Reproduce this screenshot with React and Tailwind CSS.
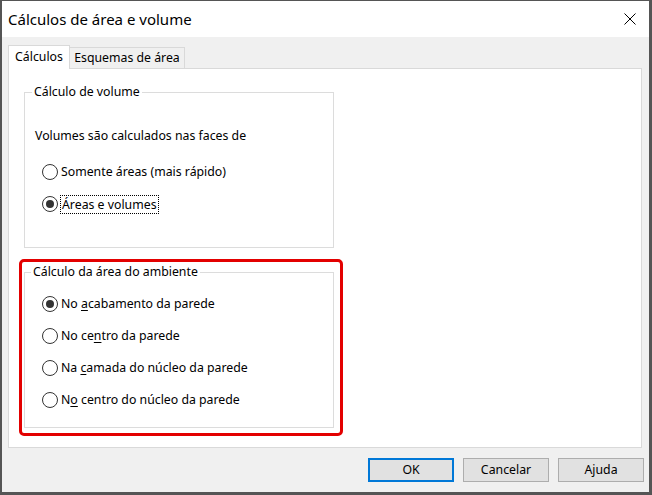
import React from "react";

const font = { fontFamily: '"Noto Sans", "Liberation Sans", sans-serif' };

function Radio({ checked }) {
  return (
    <span className="w-[16px] h-[16px] rounded-full border border-[#333333] bg-white flex items-center justify-center shrink-0">
      {checked && <span className="w-[8px] h-[8px] rounded-full bg-[#333333]" />}
    </span>
  );
}

function Row({ checked, children }) {
  return (
    <div className="h-[20px] flex items-center pl-[17px] gap-[3px]">
      <Radio checked={checked} />
      <span className="leading-[16px]">{children}</span>
    </div>
  );
}

export default function App() {
  return (
    <div
      className="w-[652px] h-[495px] flex flex-col bg-[#f0f0f0] border-[#555555] border-t border-l-2 border-r-[3px] border-b-[3px] text-[12.3px] text-black"
      style={font}
    >
      {/* title bar */}
      <div className="h-[36px] bg-white flex items-center justify-between pl-[6px] pr-[13px] shrink-0">
        <span className="text-[15px] leading-[20px]">Cálculos de área e volume</span>
        <svg width="12" height="12" viewBox="0 0 12 12" className="mt-[-1px]">
          <path d="M0.5 0.5 L11.5 11.5 M11.5 0.5 L0.5 11.5" stroke="#000" strokeWidth="1" />
        </svg>
      </div>

      {/* tabs */}
      <div className="flex items-end h-[23px] mt-[9px] ml-[6px] relative z-10 -mb-px shrink-0">
        <div className="w-[62px] h-[24px] bg-white border-t border-x border-[#d9d9d9] flex items-center justify-center pb-[1px]">
          Cálculos
        </div>
        <div className="w-[115px] h-[22px] bg-[#f0f0f0] border border-l-0 border-[#d9d9d9] flex items-center justify-center pt-[1px]">
          Esquemas de área
        </div>
      </div>

      {/* panel */}
      <div className="ml-[6px] w-[634px] h-[380px] bg-white border border-[#d9d9d9] relative shrink-0">
        <fieldset className="ml-[15px] mt-[15px] w-[310px] h-[164px] border border-[#dcdcdc]">
          <legend className="ml-[7px] px-[2px] leading-[16px]">Cálculo de volume</legend>
          <div className="pl-[10px] mt-[28px] leading-[16px]">Volumes são calculados nas faces de</div>
          <div className="mt-[18px]">
            <Row>Somente áreas (mais rápido)</Row>
          </div>
          <div className="mt-[12px] h-[20px] flex items-center pl-[17px] gap-[2px]">
            <Radio checked />
            <span className="leading-[17px] border border-dotted border-black px-[1px]">Áreas e volumes</span>
          </div>
        </fieldset>

        <fieldset className="ml-[15px] mt-[16px] w-[310px] h-[164px] border border-[#dcdcdc]">
          <legend className="ml-[6px] px-[2px] leading-[16px]">Cálculo da área do ambiente</legend>
          <div className="mt-[14px] flex flex-col gap-[12px]">
            <Row checked>
              No <u className="underline-offset-2">a</u>cabamento da parede
            </Row>
            <Row>
              No ce<u className="underline-offset-2">n</u>tro da parede
            </Row>
            <Row>
              Na <u className="underline-offset-2">c</u>amada do núcleo da parede
            </Row>
            <Row>
              N<u className="underline-offset-2">o</u> centro do núcleo da parede
            </Row>
          </div>
        </fieldset>

        {/* red annotation */}
        <div className="absolute left-[10px] top-[190px] w-[324px] h-[177px] border-[3px] border-[#e30000] rounded-[5px] pointer-events-none" />
      </div>

      {/* buttons */}
      <div className="flex justify-end gap-[9px] mt-[10px] mr-[5px] shrink-0">
        <button className="w-[86px] h-[24px] bg-[#e1e1e1] border-2 border-[#0078d7] leading-none">OK</button>
        <button className="w-[86px] h-[24px] bg-[#e1e1e1] border border-[#adadad] leading-none">Cancelar</button>
        <button className="w-[86px] h-[24px] bg-[#e1e1e1] border border-[#adadad] leading-none">Ajuda</button>
      </div>
    </div>
  );
}
